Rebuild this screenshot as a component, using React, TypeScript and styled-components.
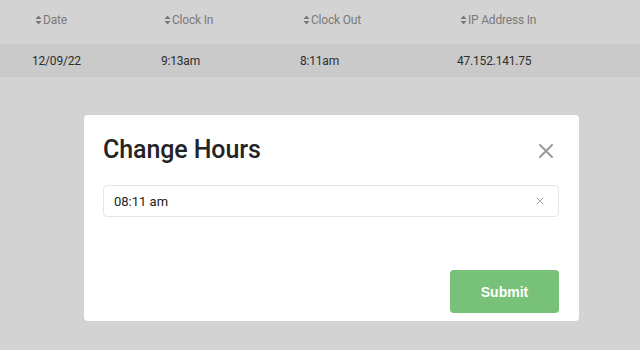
import React, { useState } from 'react';
import styled, { createGlobalStyle } from 'styled-components';

const GlobalStyle = createGlobalStyle`
  html, body {
    margin: 0;
    padding: 0;
    background: #d3d3d3;
    font-family: Roboto, "Liberation Sans", sans-serif;
  }
`;

const Page = styled.div`
  width: 640px;
  height: 350px;
  background: #d3d3d3;
  overflow: hidden;
`;

const Grid = styled.div`
  display: grid;
  grid-template-columns: 129px 139px 157px 1fr;
  padding-left: 32px;
`;

const HeaderRow = styled(Grid)`
  height: 44px;
  align-items: center;
`;

const HeaderCell = styled.div`
  display: flex;
  align-items: center;
  gap: 1px;
  padding: 0 0 5px 3px;
  font-size: 12px;
  color: #7a7a7a;
  letter-spacing: -0.2px;
`;

const DataRow = styled(Grid)`
  height: 33px;
  align-items: center;
  background: #cacaca;
`;

const DataCell = styled.div`
  font-size: 12px;
  color: #2e2e2e;
  letter-spacing: -0.2px;
`;

const Overlay = styled.div`
  position: fixed;
  inset: 0;
  padding: 115px 0 0 84px;
`;

const Modal = styled.div`
  width: 495px;
  height: 206px;
  box-sizing: border-box;
  background: #fff;
  border-radius: 4px;
  padding: 18px 20px 8px 19px;
  display: flex;
  flex-direction: column;
`;

const TitleBar = styled.div`
  display: flex;
  align-items: center;
  justify-content: space-between;
  height: 32px;
`;

const Title = styled.h2`
  margin: 0;
  font-size: 25px;
  font-weight: 500;
  color: #242424;
  letter-spacing: -0.1px;
`;

const CloseButton = styled.button`
  border: 0;
  background: none;
  padding: 0;
  margin: 4px 6px 0 0;
  width: 14px;
  height: 14px;
  display: flex;
  cursor: pointer;
`;

const InputBox = styled.div`
  margin-top: 20px;
  height: 32px;
  box-sizing: border-box;
  border: 1px solid #e6e6e6;
  border-radius: 4px;
  display: flex;
  align-items: center;
  padding: 0 14px 0 10px;
`;

const TimeInput = styled.input`
  flex: 1;
  border: 0;
  outline: none;
  font-family: Roboto, "Liberation Sans", sans-serif;
  font-size: 13px;
  color: #222;
  padding: 0;
  background: transparent;
`;

const ClearButton = styled.button`
  border: 0;
  background: none;
  padding: 0;
  width: 8px;
  height: 8px;
  display: flex;
  cursor: pointer;
`;

const Footer = styled.div`
  margin-top: auto;
  display: flex;
  justify-content: flex-end;
`;

const SubmitButton = styled.button`
  width: 109px;
  height: 43px;
  border: 0;
  border-radius: 4px;
  background: #78c178;
  color: #fff;
  font-family: "Liberation Sans", Arial, sans-serif;
  font-weight: 700;
  font-size: 14px;
  cursor: pointer;
`;

const SortIcon = () => (
  <svg width="7" height="10" viewBox="0 0 7 10">
    <path d="M3.5 0.5 L6.5 4 L0.5 4 Z M0.5 6 L6.5 6 L3.5 9.5 Z" fill="#777" />
  </svg>
);

const Cross = ({ size, color, width }: { size: number; color: string; width: number }) => (
  <svg width={size} height={size} viewBox={`0 0 ${size} ${size}`}>
    <path
      d={`M1 1 L${size - 1} ${size - 1} M${size - 1} 1 L1 ${size - 1}`}
      stroke={color}
      strokeWidth={width}
      strokeLinecap="round"
    />
  </svg>
);

const columns = ['Date', 'Clock In', 'Clock Out', 'IP Address In'];
const row = ['12/09/22', '9:13am', '8:11am', '47.152.141.75'];

const App = () => {
  const [value, setValue] = useState('08:11 am');

  return (
    <Page>
      <GlobalStyle />
      <HeaderRow>
        {columns.map((c) => (
          <HeaderCell key={c}>
            <SortIcon />
            {c}
          </HeaderCell>
        ))}
      </HeaderRow>
      <DataRow>
        {row.map((v) => (
          <DataCell key={v}>{v}</DataCell>
        ))}
      </DataRow>
      <Overlay>
        <Modal>
          <TitleBar>
            <Title>Change Hours</Title>
            <CloseButton aria-label="Close">
              <Cross size={14} color="#9a9a9a" width={2} />
            </CloseButton>
          </TitleBar>
          <InputBox>
            <TimeInput value={value} onChange={(e) => setValue(e.target.value)} />
            <ClearButton aria-label="Clear" onClick={() => setValue('')}>
              <Cross size={8} color="#a8a8a8" width={1} />
            </ClearButton>
          </InputBox>
          <Footer>
            <SubmitButton>Submit</SubmitButton>
          </Footer>
        </Modal>
      </Overlay>
    </Page>
  );
};

export default App;
